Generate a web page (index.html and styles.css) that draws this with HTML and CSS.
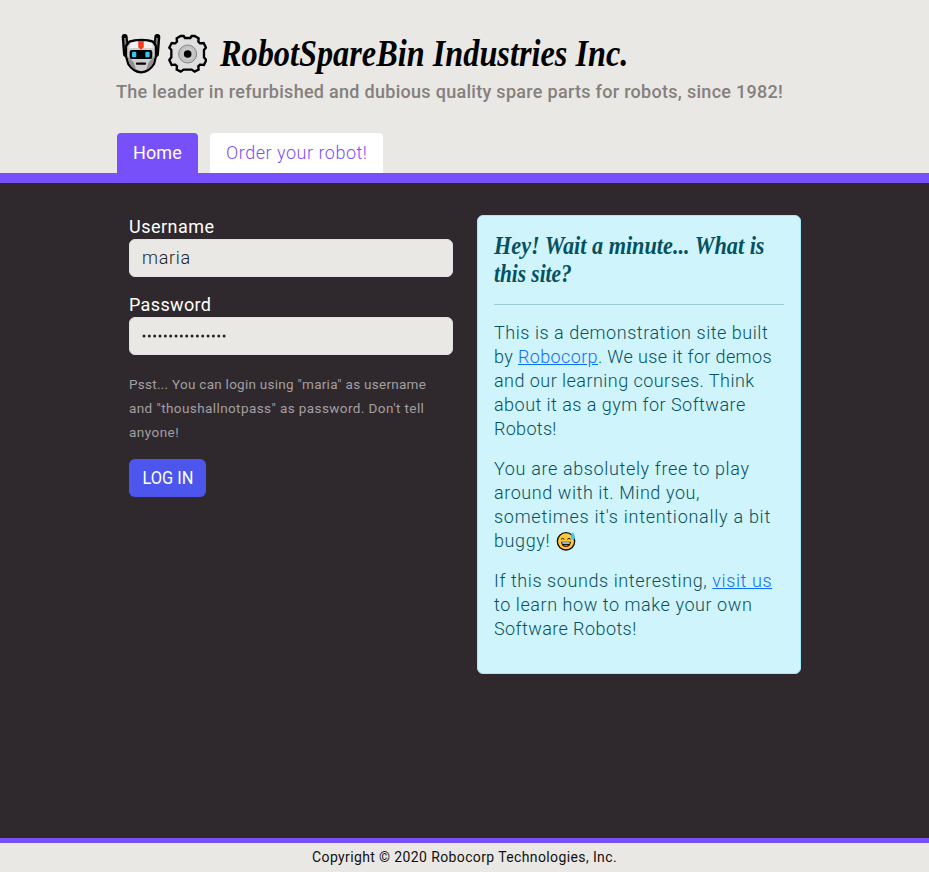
FILE: index.html
```html
<!DOCTYPE html>
<html lang="en">
<head>
<meta charset="utf-8">
<title>RobotSpareBin Industries Inc.</title>
<link rel="stylesheet" href="styles.css">
</head>
<body>
<header class="header">
  <div class="brand">
    <svg class="robot" viewBox="32 20 124 126" aria-hidden="true">
      <path d="M43 35 L47 86 M141 35 L137 86" stroke="#000" stroke-width="18" stroke-linecap="round"/>
      <path d="M44 38 L48 90 M140 38 L136 90" stroke="#777" stroke-width="6"/>
      <path d="M57 49 Q71 44 93 44 Q115 44 128 49 L137 62 V92 L131 116 Q116 140 93 141 Q70 140 54 116 L47 92 V62 Z" fill="#cfcfcf" stroke="#000" stroke-width="7"/>
      <path d="M51 92 L70 111 L78 134 Q62 127 56 112 Z M133 92 L115 111 L107 134 Q122 127 129 112 Z" fill="#8f8f8f"/>
      <path d="M60 53 Q72 48 84 48 V68 H57 Z M101 48 Q115 48 125 53 L128 68 H101 Z" fill="#f2f2f2"/>
      <path d="M84 48 H100 V66 L92 73 L84 66 Z" fill="#f63b14"/>
      <rect x="58" y="74" width="68" height="27" rx="6"/>
      <rect x="65" y="79" width="13" height="17" rx="4" fill="#30c8f5"/>
      <rect x="105" y="79" width="13" height="17" rx="4" fill="#30c8f5"/>
      <path d="M80 115 H104" stroke="#000" stroke-width="7" stroke-linecap="round"/>
    </svg>
    <svg class="gear" viewBox="174 26 118 118" aria-hidden="true">
      <path d="M212 32 L221 32 L225 38 H241 L245 32 L254 32 L266 39 L265 49 L270 54 L281 53 L288 67 L282 74 V96 L289 104 L282 119 L270 118 L265 123 L266 133 L254 139 L245 133 H221 L212 139 L200 133 L201 123 L196 118 L185 119 L178 104 L184 96 V74 L178 67 L185 53 L196 54 L201 49 L200 39 Z" fill="#dfdfdf" stroke="#000" stroke-width="7"/>
      <circle cx="233" cy="86" r="27" fill="#c2c2c2" stroke="#858585" stroke-width="3"/>
      <circle cx="233" cy="86" r="18" fill="#c9c9c9"/>
      <circle cx="233" cy="86" r="11.5"/>
    </svg>
    <h1 class="title">RobotSpareBin Industries Inc.</h1>
  </div>
  <p class="tagline">The leader in refurbished and dubious quality spare parts for robots, since 1982!</p>
  <nav class="tabs"><a class="tab active">Home</a><a class="tab order">Order your robot!</a></nav>
</header>
<main class="main">
  <form class="form">
    <label class="label user">Username</label>
    <div class="input">maria</div>
    <label class="label pass">Password</label>
    <div class="input dots">
      <svg width="86" height="6" viewBox="0 0 86 6" aria-hidden="true"><path d="M2 3H84" stroke="#212529" stroke-width="3" stroke-linecap="round" stroke-dasharray="0 5.34"/></svg>
    </div>
    <p class="hint"><span class="line h1">Psst... You can login using "maria" as username</span><span class="line h2">and "thoushallnotpass" as password. Don't tell</span><span class="line h3">anyone!</span></p>
    <button class="button" type="button"><span class="caption">LOG IN</span></button>
  </form>
  <aside class="card">
    <h2 class="heading"><span class="line t1">Hey! Wait a minute... What is</span><span class="line t2">this site?</span></h2>
    <hr class="rule">
    <p><span class="line a1">This is a demonstration site built</span><span class="line a2">by <a class="link">Robocorp</a>. We use it for demos</span><span class="line a3">and our learning courses. Think</span><span class="line a4">about it as a gym for Software</span><span class="line a5">Robots!</span></p>
    <p><span class="line b1">You are absolutely free to play</span><span class="line b2">around with it. Mind you,</span><span class="line b3">sometimes it's intentionally a bit</span><span class="line b4">buggy!
      <svg class="smile" viewBox="0 0 60 60" aria-hidden="true">
        <circle cx="30" cy="31" r="26" fill="#ffc83d" stroke="#111" stroke-width="4"/>
        <path d="M15 32 H45 Q43 48 30 48 Q17 48 15 32Z" fill="#111"/>
        <path d="M19 34H41V38H19Z" fill="#fff"/>
        <path d="M22 44Q30 39 38 44Q30 49 22 44Z" fill="#f03a17"/>
        <path d="M15 25Q20 19 25 25M34 25Q39 19 44 25" fill="none" stroke="#111" stroke-width="3"/>
        <path d="M50 4Q60 16 56 23Q49 28 45 21Q43 16 50 4Z" fill="#3fc4f5"/>
      </svg></span></p>
    <p><span class="line c1">If this sounds interesting, <a class="link">visit us</a></span><span class="line c2">to learn how to make your own</span><span class="line c3">Software Robots!</span></p>
  </aside>
</main>
<footer class="footer">Copyright © 2020 Robocorp Technologies, Inc.</footer>
</body>
</html>
```
FILE: styles.css
```css
*{box-sizing:border-box}
body{margin:0;height:872px;display:flex;flex-direction:column;background:#2f292e;font:300 18px/24px Roboto,"Liberation Sans",sans-serif;color:#212529;overflow:hidden}
p,h1,h2{margin:0}
.header{height:183px;background:#e9e8e4;border-bottom:10px solid #7850fa;padding:31px 116px 0;display:flex;flex-direction:column}
.brand{display:flex;height:48px;padding-left:5px}
.robot{width:41.3px;height:42px;margin-top:.7px;flex:none}
.gear{width:39.3px;height:39.3px;margin:2.7px 0 0 5.7px;flex:none}
.title{font:italic 700 38px/48px "Liberation Serif",serif;color:#000;white-space:nowrap;margin-left:13px;margin-top:-2px;transform:scaleX(.85);transform-origin:left}
.tagline{font-weight:500;color:#857f7d;letter-spacing:.29px;white-space:nowrap;margin-top:1px}
.tabs{display:flex;gap:12px;margin:29px 0 0 1px}
.tab{height:40px;padding:8px 16px;border-radius:4px 4px 0 0;background:#fff;color:#7850fa;white-space:nowrap}
.tab.active{width:81px;background:#7850fa;color:#fff;font-weight:400;letter-spacing:.1px}
.tab.order{width:173px;letter-spacing:.52px}
.main{flex:1;display:flex;align-items:flex-start;gap:24px;padding:32px 0 0 129px}
.form{width:324px;display:flex;flex-direction:column;align-items:flex-start}
.label{font-weight:400;color:#fff}
.user{letter-spacing:.5px}
.pass{letter-spacing:.35px;margin-top:16px}
.input{width:324px;height:38px;padding:6px 12px;border:1px solid #dee2e6;border-radius:6px;background:#e9e8e4;letter-spacing:.7px}
.dots{display:flex;align-items:center}
.line{display:block;white-space:nowrap}
.hint{margin-top:17px;font-size:13.5px;font-weight:400;color:#a39fa1}
.h1{letter-spacing:.27px}
.h2{letter-spacing:.41px}
.h3{letter-spacing:.47px}
.button{width:77px;height:38px;margin-top:15px;padding:0;border:0;border-radius:6px;background:#4c56ec;color:#fff;font:400 18px/24px Roboto,sans-serif}
.caption{display:inline-block;margin:0 -4px;transform:scaleX(.91)}
.card{width:324px;height:459px;padding:16px;border:1px solid #9eeaf9;border-radius:6px;background:#cff4fc;color:#055160}
.heading{font:italic 700 26px/28px "Liberation Serif",serif}
.heading .line{width:max-content;transform-origin:left}
.t1{transform:scaleX(.855)}
.t2{transform:scaleX(.82)}
.rule{border:0;border-top:1px solid #055160;opacity:.25;margin:16px 0}
.card p{margin-bottom:16px}
.link{color:#0d6efd;text-decoration:underline}
.a1{letter-spacing:.54px}
.a2{letter-spacing:.37px}
.a3{letter-spacing:.46px}
.a4{letter-spacing:.47px}
.a5{letter-spacing:.3px}
.b1{letter-spacing:.64px}
.b2{letter-spacing:.57px}
.b3{letter-spacing:.73px}
.b4{letter-spacing:.6px}
.c1{letter-spacing:.59px}
.c2{letter-spacing:.57px}
.c3{letter-spacing:.42px}
.smile{width:20px;height:20px;vertical-align:-4px;margin-left:1px}
.footer{height:34px;border-top:5px solid #7850fa;background:#e9e8e4;color:#111;text-align:center;font-size:14px;font-weight:400;line-height:29px;letter-spacing:.38px}
```
